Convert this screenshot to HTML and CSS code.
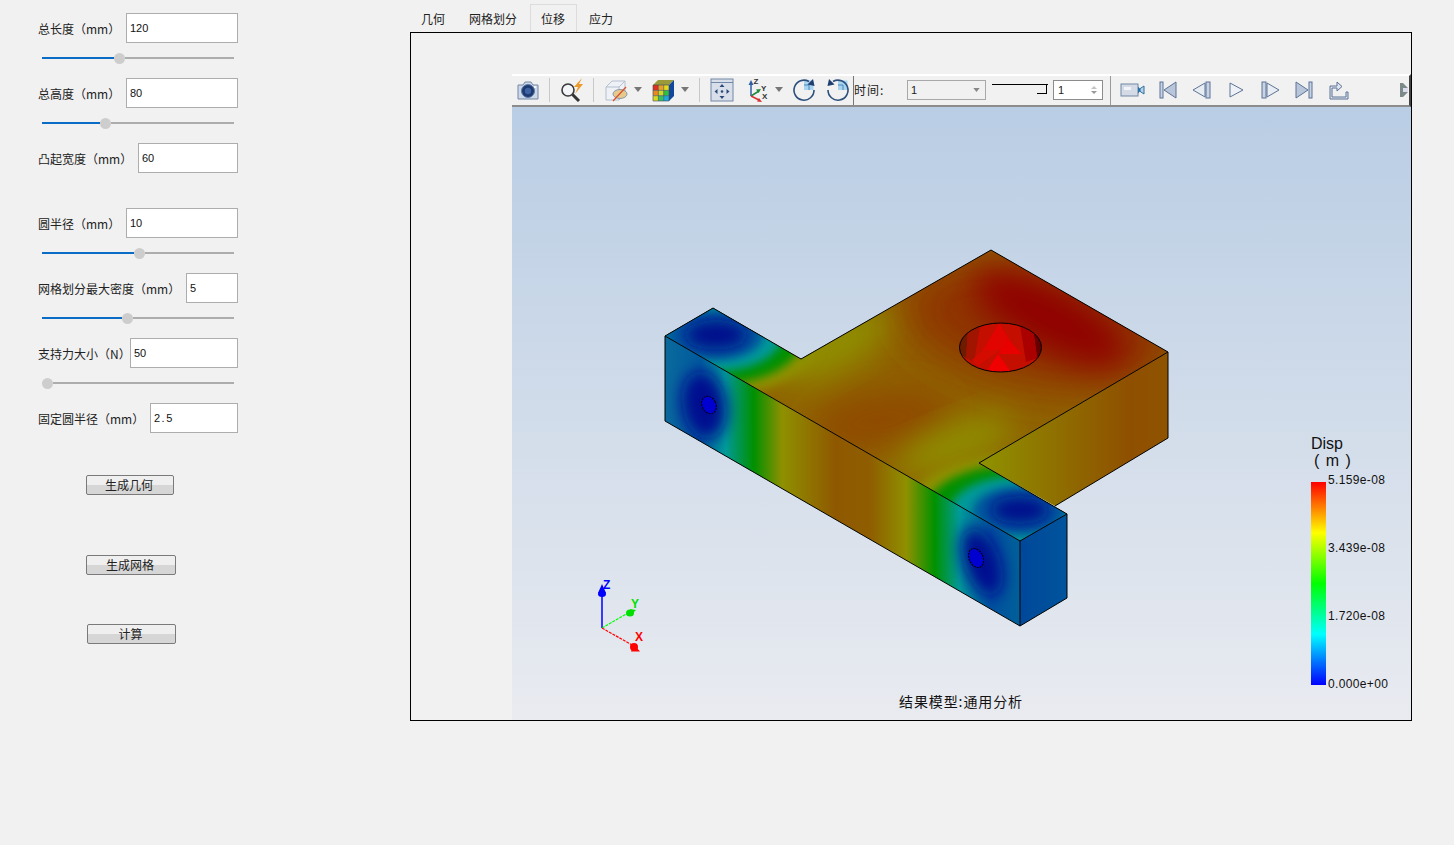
FILE: index.html
```html
<!DOCTYPE html>
<html lang="zh">
<head>
    <meta charset="UTF-8">
    <title>位移</title>
    <link rel="stylesheet" href="styles.css">
</head>
<body>
    <div class="sidebar">
        <div class="field"><label>总长度（mm）</label><input class="w-112" value="120"></div>
        <div class="slider"><div class="fill" style="width:72px"></div><div class="knob"></div><div class="rest"></div></div>

        <div class="field"><label>总高度（mm）</label><input class="w-112" value="80"></div>
        <div class="slider"><div class="fill" style="width:58px"></div><div class="knob"></div><div class="rest"></div></div>

        <div class="field"><label>凸起宽度（mm）</label><input class="w-100" value="60"></div>
        <div class="slider"></div>

        <div class="field"><label>圆半径（mm）</label><input class="w-112" value="10"></div>
        <div class="slider"><div class="fill" style="width:92px"></div><div class="knob"></div><div class="rest"></div></div>

        <div class="field"><label>网格划分最大密度（mm）</label><input class="w-52" value="5"></div>
        <div class="slider"><div class="fill" style="width:80px"></div><div class="knob"></div><div class="rest"></div></div>

        <div class="field"><label>支持力大小（N）</label><input class="w-108" value="50"></div>
        <div class="slider"><div class="fill" style="width:0"></div><div class="knob"></div><div class="rest"></div></div>

        <div class="field"><label>固定圆半径（mm）</label><input class="w-88 spaced" value="2.5"></div>
        <div class="slider"></div>

        <button class="btn btn-geom">生成几何</button>
        <button class="btn btn-mesh">生成网格</button>
        <button class="btn btn-calc">计算</button>
    </div>

    <div class="main">
        <div class="tabs">
            <span class="tab">几何</span>
            <span class="tab">网格划分</span>
            <span class="tab active">位移</span>
            <span class="tab">应力</span>
        </div>
        <div class="panel">
            <div class="viewer">
                <div class="toolbar">
                    <svg class="icon" viewBox="0 0 24 24"><path d="M2 7h5l2-3h6l2 3h5v14H2z" fill="#cdd8e8" stroke="#7387a6"/><circle cx="12" cy="13" r="6.5" fill="#1d3a72" stroke="#5f7ba8"/><circle cx="12" cy="13" r="3.2" fill="#3f62a0"/><circle cx="19" cy="9" r="1" fill="#fff"/></svg>
                    <i class="sep"></i>
                    <svg class="icon" viewBox="0 0 24 24"><circle cx="8" cy="12" r="6" fill="#f3f5f8" stroke="#3a3a3a" stroke-width="1.6"/><path d="M12.500 16.500l6.500 6.500" stroke="#333" stroke-width="3"/><path d="M22 0l-8 9h4l-3 7 8-10h-4l3-6z" fill="#eb9a2c"/></svg>
                    <i class="sep"></i>
                    <svg class="icon" viewBox="0 0 24 24"><path d="M2 9l6-6h13v12l-6 7H2z" fill="#eef1f6" stroke="#b4bfd0"/><path d="M2 9h13v13M15 9l6-6" fill="none" stroke="#b4bfd0"/><ellipse cx="16" cy="16" rx="7" ry="4.5" fill="#e6c98c" stroke="#8c97a8"/><path d="M9 23L22 9" stroke="#d9502c" stroke-width="1.3"/></svg>
                    <svg class="caret" viewBox="0 0 8 5"><path d="M0 0h8L4 5z" fill="#777"/></svg>
                    <svg class="icon" viewBox="0 0 24 24"><path d="M2 7l5-5h16l-5 5z" fill="#9a9a3a"/><path d="M18 7l5-5v16l-5 5z" fill="#12489c"/><rect x="2" y="7" width="5.4" height="5.4" fill="#e23020"/><rect x="7.4" y="7" width="5.3" height="5.4" fill="#e8a020"/><rect x="12.7" y="7" width="5.3" height="5.4" fill="#e4d820"/><rect x="2" y="12.4" width="5.4" height="5.3" fill="#e88a20"/><rect x="7.4" y="12.4" width="5.3" height="5.3" fill="#cfd820"/><rect x="12.7" y="12.4" width="5.3" height="5.3" fill="#30c040"/><rect x="2" y="17.7" width="5.4" height="5.3" fill="#d8d820"/><rect x="7.4" y="17.7" width="5.3" height="5.3" fill="#30c060"/><rect x="12.7" y="17.7" width="5.3" height="5.3" fill="#20a8d8"/><path d="M2 7h16v16H2zM7.4 7v16M12.7 7v16M2 12.4h16M2 17.7h16" fill="none" stroke="#3a4a60" stroke-width=".6"/></svg>
                    <svg class="caret" viewBox="0 0 8 5"><path d="M0 0h8L4 5z" fill="#777"/></svg>
                    <i class="sep tight"></i>
                    <svg class="icon" viewBox="0 0 24 24"><rect x="1" y="1" width="22" height="22" fill="#d9dfea" stroke="#7387a6"/><path d="M1 4.500h22" stroke="#7387a6"/><path d="M12 6l-2.500 3h5zM12 21l-2.500-3h5zM4.500 13.500l3-2.500v5zM19.500 13.500l-3-2.500v5z" fill="#2c4a78"/><circle cx="12" cy="13.500" r="1.300" fill="#2c4a78"/></svg>
                    <svg class="icon gap-11" viewBox="0 0 24 24"><path d="M6 6v12" stroke="#2c5fa8" stroke-width="1.500"/><path d="M6 2l-2.500 5h5z" fill="#2c5fa8"/><path d="M6 18l8-5" stroke="#1d8a3c" stroke-width="1.500"/><path d="M16 11l-5 .5 2.500 3.500z" fill="#1d8a3c"/><path d="M6 18l8 4" stroke="#d83030" stroke-width="1.500"/><path d="M17 24l-5-.5 2-3.500z" fill="#d83030"/><text x="8.500" y="6" class="axis-mark">Z</text><text x="16" y="13" class="axis-mark">Y</text><text x="17" y="21" class="axis-mark">X</text></svg>
                    <svg class="caret" viewBox="0 0 8 5"><path d="M0 0h8L4 5z" fill="#777"/></svg>
                    <svg class="icon" viewBox="0 0 24 24"><path d="M12 12V2.500h9.500V12z" fill="#a9d4f0"/><path d="M12 7h5v5" fill="none" stroke="#4a88b8"/><path d="M17 3.500A10 10 0 1 0 22 12" fill="none" stroke="#2c4f7c" stroke-width="1.600"/><path d="M21 1l1.500 7-7-1.500z" fill="#1f3f70"/></svg>
                    <svg class="icon gap-10" viewBox="0 0 24 24"><path d="M12 12V2.500h9.500V12z" fill="#a9d4f0"/><path d="M12 7h5v5" fill="none" stroke="#4a88b8"/><path d="M7 3.500A10 10 0 1 1 2 12" fill="none" stroke="#2c4f7c" stroke-width="1.600"/><path d="M3 1l-1.500 7 7-1.500z" fill="#1f3f70"/></svg>
                    <i class="sep sep-dark"></i>
                    <span class="time-label">时间:</span>
                    <div class="combo"><span>1</span><svg class="combo-caret" viewBox="0 0 8 5"><path d="M0 0h8L4 5z" fill="#888"/></svg></div>
                    <div class="time-slider"><i></i></div>
                    <div class="spin"><span>1</span><div class="spin-arrows"><b></b><u></u></div></div>
                    <i class="sep sep-play"></i>
                    <div class="playbar">
                        <svg class="icon wide" viewBox="0 0 26 24"><rect x="1" y="6" width="17" height="12" fill="#d4dbe6" stroke="#7387a6"/><rect x="4" y="9" width="7" height="3" fill="#f2f4f8"/><path d="M18 12l6-4v8z" fill="#b8d4e8" stroke="#2f6f9c"/><path d="M18 8.500v7l3-3.500z" fill="#2a70a8"/></svg>
                        <svg class="icon" viewBox="0 0 24 24"><rect x="4" y="4" width="3" height="16" fill="#c8d3e4" stroke="#5d7396"/><path d="M20 4v16L8 12z" fill="#b9c6da" stroke="#5d7396"/></svg>
                        <svg class="icon" viewBox="0 0 24 24"><path d="M15 5v14L3 12z" fill="#e8edf4" stroke="#5d7396"/><rect x="16" y="4" width="4" height="16" fill="#c8d3e4" stroke="#5d7396"/></svg>
                        <svg class="icon" viewBox="0 0 24 24"><path d="M6 5v14l13-7z" fill="#eef2f7" stroke="#5d7396"/></svg>
                        <svg class="icon" viewBox="0 0 24 24"><rect x="4" y="4" width="4" height="16" fill="#c8d3e4" stroke="#5d7396"/><path d="M9 5v14l12-7z" fill="#e8edf4" stroke="#5d7396"/></svg>
                        <svg class="icon" viewBox="0 0 24 24"><path d="M4 4v16l12-8z" fill="#b9c6da" stroke="#5d7396"/><rect x="17" y="4" width="3" height="16" fill="#c8d3e4" stroke="#5d7396"/></svg>
                        <svg class="icon" viewBox="0 0 24 24"><path d="M4 8h7V4l5 4.500-5 4.500v-3H6v9h14v-5h2v7H4z" fill="#dfe6f0" stroke="#5d7396"/></svg>
                        <svg class="grip" viewBox="0 0 8 16"><path d="M0 1h3l5 5H3v4h5l-5 5H0z" fill="#7d8a8a"/><path d="M3 6h5v4H3z" fill="#dde"/></svg>
                    </div>
                </div>
                <svg class="scene" viewBox="512 107 899 613">
                    <defs>
                        <linearGradient id="sky" x1="0" y1="0" x2="0" y2="1">
                            <stop offset="0" stop-color="#b9cde4"/>
                            <stop offset="1" stop-color="#e9ebf0"/>
                        </linearGradient>
                        <linearGradient id="frontBands" gradientUnits="userSpaceOnUse" x1="665" y1="0" x2="1020" y2="0">
                            <stop offset="0" stop-color="#0a6a9c"/>
                            <stop offset=".1" stop-color="#005a9e"/>
                            <stop offset=".17" stop-color="#009a9a"/>
                            <stop offset=".25" stop-color="#009000"/>
                            <stop offset=".33" stop-color="#8f9000"/>
                            <stop offset=".48" stop-color="#8f5800"/>
                            <stop offset=".58" stop-color="#8f5e00"/>
                            <stop offset=".68" stop-color="#8f9000"/>
                            <stop offset=".76" stop-color="#009200"/>
                            <stop offset=".83" stop-color="#009a9a"/>
                            <stop offset=".92" stop-color="#00509e"/>
                            <stop offset="1" stop-color="#006099"/>
                        </linearGradient>
                        <linearGradient id="sideBands" gradientUnits="userSpaceOnUse" x1="985" y1="0" x2="1168" y2="0">
                            <stop offset="0" stop-color="#8f9000"/>
                            <stop offset=".45" stop-color="#8f6a00"/>
                            <stop offset=".8" stop-color="#8f4f00"/>
                            <stop offset="1" stop-color="#8f5400"/>
                        </linearGradient>
                        <linearGradient id="endBands" gradientUnits="userSpaceOnUse" x1="1020" y1="0" x2="1067" y2="0">
                            <stop offset="0" stop-color="#00489a"/>
                            <stop offset="1" stop-color="#00549c"/>
                        </linearGradient>
                        <linearGradient id="legendBands" x1="0" y1="0" x2="0" y2="1">
                            <stop offset="0" stop-color="#ff0000"/>
                            <stop offset=".25" stop-color="#ffff00"/>
                            <stop offset=".5" stop-color="#00ff00"/>
                            <stop offset=".75" stop-color="#00ffff"/>
                            <stop offset="1" stop-color="#0000ff"/>
                        </linearGradient>
                        <clipPath id="topClip"><path d="M665 336L713 308L801 359L991 250L1168 352L979 463L1067 514L1020 541z"/></clipPath>
                        <clipPath id="frontClip"><path d="M665 336L1020 541V626L665 421z"/></clipPath>
                        <clipPath id="holeClip"><ellipse cx="1000.500" cy="347.500" rx="41" ry="24.500"/></clipPath>
                        <filter id="blurHuge" x="-60%" y="-60%" width="220%" height="220%"><feGaussianBlur stdDeviation="24"/></filter>
                        <filter id="blurWide" x="-50%" y="-50%" width="200%" height="200%"><feGaussianBlur stdDeviation="16"/></filter>
                        <filter id="blurMid" x="-50%" y="-50%" width="200%" height="200%"><feGaussianBlur stdDeviation="8"/></filter>
                        <filter id="blurTight" x="-50%" y="-50%" width="200%" height="200%"><feGaussianBlur stdDeviation="5"/></filter>
                    </defs>

                    <rect x="512" y="107" width="899" height="613" fill="url(#sky)"/>

                    <!-- plate top -->
                    <g clip-path="url(#topClip)">
                        <rect x="660" y="245" width="515" height="300" fill="#8f6400"/>
                        <ellipse cx="1040" cy="325" rx="140" ry="62" transform="rotate(10 1040 325)" fill="#8f3000" filter="url(#blurHuge)"/>
                        <ellipse cx="1050" cy="318" rx="85" ry="30" transform="rotate(28 1050 318)" fill="#900000" filter="url(#blurWide)"/>
                        <ellipse cx="880" cy="420" rx="70" ry="30" transform="rotate(-10 880 420)" fill="#8f4c00" filter="url(#blurWide)"/>
                        <ellipse cx="835" cy="345" rx="62" ry="24" transform="rotate(-30 835 345)" fill="#8f9000" filter="url(#blurWide)"/>
                        <ellipse cx="955" cy="445" rx="62" ry="20" transform="rotate(-22 955 445)" fill="#8f9000" filter="url(#blurWide)"/>
                        <ellipse cx="712" cy="338" rx="108" ry="58" fill="#8f9000" filter="url(#blurTight)"/>
                        <ellipse cx="712" cy="338" rx="90" ry="47" fill="#009000" filter="url(#blurTight)"/>
                        <ellipse cx="712" cy="336" rx="70" ry="36" fill="#009a9a" filter="url(#blurTight)"/>
                        <ellipse cx="714" cy="335" rx="50" ry="25" fill="#005a9e" filter="url(#blurTight)"/>
                        <ellipse cx="716" cy="335" rx="32" ry="15" fill="#000a8c" filter="url(#blurMid)"/>
                        <ellipse cx="1015" cy="512" rx="108" ry="58" fill="#8f9000" filter="url(#blurTight)"/>
                        <ellipse cx="1015" cy="512" rx="90" ry="47" fill="#009000" filter="url(#blurTight)"/>
                        <ellipse cx="1018" cy="512" rx="68" ry="36" fill="#009a9a" filter="url(#blurTight)"/>
                        <ellipse cx="1020" cy="511" rx="48" ry="24" fill="#005a9e" filter="url(#blurTight)"/>
                        <ellipse cx="1020" cy="510" rx="30" ry="14" fill="#000a8c" filter="url(#blurMid)"/>
                    </g>

                    <!-- long front face -->
                    <g clip-path="url(#frontClip)">
                        <rect x="665" y="330" width="356" height="300" fill="url(#frontBands)"/>
                        <ellipse cx="704" cy="405" rx="22" ry="34" transform="rotate(-10 704 405)" fill="#000a90" filter="url(#blurMid)"/>
                        <ellipse cx="982" cy="562" rx="18" ry="36" transform="rotate(-20 982 562)" fill="#000a90" filter="url(#blurMid)"/>
                    </g>

                    <path d="M979 463L1168 352V438L1055 506z" fill="url(#sideBands)"/>
                    <path d="M1020 541L1067 514V598L1020 626z" fill="url(#endBands)"/>

                    <!-- big hole -->
                    <g clip-path="url(#holeClip)">
                        <rect x="958" y="322" width="86" height="52" fill="#c40e00"/>
                        <path d="M958 335L968 331L966 358L958 352z" fill="#6e1c00"/>
                        <path d="M968 331L980 326L974 362L966 358z" fill="#a01400"/>
                        <path d="M1042 335L1033 329L1037 358L1042 352z" fill="#660000"/>
                        <path d="M1020 325L1033 329L1037 358L1026 362z" fill="#aa0000"/>
                        <path d="M999 323L983 350L1016 350z" fill="#e20400"/>
                        <path d="M983 350L1000 350L978 366L972 360z" fill="#d40c00"/>
                        <path d="M1008 339L998 354L1022 354z" fill="#e80000"/>
                        <path d="M998 354L986 372L1011 372z" fill="#f00000"/>
                    </g>
                    <ellipse cx="1000.500" cy="347.500" rx="41" ry="24.500" fill="none" stroke="#000"/>

                    <!-- small holes -->
                    <ellipse cx="709" cy="405" rx="7" ry="9" transform="rotate(-25 709 405)" fill="#0000d0" stroke="#000" stroke-dasharray="2 1"/>
                    <ellipse cx="976" cy="558" rx="7" ry="10" transform="rotate(-25 976 558)" fill="#0000d0" stroke="#000" stroke-dasharray="2 1"/>

                    <!-- edges -->
                    <path class="edge" d="M665 336L713 308L801 359L991 250L1168 352V438L1055 506M1168 352L979 463L1067 514V598L1020 626L665 421V336L1020 541V626M1020 541L1067 514"/>

                    <!-- triad -->
                    <path d="M602 628V592" stroke="#0000ff" stroke-width="1.500"/>
                    <path d="M602 584l-4 9h8z" fill="#0000ff"/>
                    <ellipse cx="602" cy="594" rx="4" ry="3" fill="#0000ff"/>
                    <path d="M602 628L628 613" stroke="#00ff00" stroke-width="1.200" stroke-dasharray="3 1"/>
                    <ellipse cx="630" cy="613" rx="4" ry="3.500" fill="#00e000"/>
                    <path d="M636 610l-6-1 1 6z" fill="#00e000"/>
                    <path d="M602 628L632 645" stroke="#ff0000" stroke-width="1.200" stroke-dasharray="3 1"/>
                    <ellipse cx="634" cy="647" rx="4" ry="4" fill="#ff0000"/>
                    <path d="M640 651.500l-9 0 3-7z" fill="#ff0000"/>
                    <text x="603" y="589" class="axis-letter z">Z</text>
                    <text x="631" y="608" class="axis-letter y">Y</text>
                    <text x="635" y="641" class="axis-letter x">X</text>

                    <!-- legend -->
                    <text x="1311" y="449" class="legend-title">Disp</text>
                    <text x="1314" y="466" class="legend-title spaced">( m )</text>
                    <rect x="1311" y="482" width="15" height="203" fill="url(#legendBands)"/>
                    <text x="1328" y="484" class="legend-value">5.159e-08</text>
                    <text x="1328" y="552" class="legend-value">3.439e-08</text>
                    <text x="1328" y="620" class="legend-value">1.720e-08</text>
                    <text x="1328" y="688" class="legend-value">0.000e+00</text>

                    <text x="899" y="707" class="caption">结果模型:通用分析</text>
                </svg>
            </div>
        </div>
    </div>
</body>
</html>
```

FILE: styles.css
```css
* {
    box-sizing: border-box;
    margin: 0;
    padding: 0;
}

body {
    display: flex;
    height: 845px;
    overflow: hidden;
    background-color: #f1f1f1;
    color: #222;
    font-family: "Liberation Sans", "Noto Sans CJK SC", sans-serif;
    font-size: 12px;
}

/* left column */
.sidebar {
    width: 409px;
    padding: 13px 0 0 38px;
    flex-shrink: 0;
}

.field {
    display: flex;
    align-items: center;
    width: 200px;
    height: 30px;
}

.field label {
    flex: 1 1 0;
    min-width: 0;
    white-space: nowrap;
    font-family: "Noto Sans CJK SC", sans-serif;
    font-size: 12px;
}

.field input {
    flex-shrink: 0;
    height: 30px;
    border: 1px solid #adadad;
    background: #fff;
    padding-left: 3px;
    font-family: "Liberation Sans", sans-serif;
    font-size: 11px;
    color: #111;
    outline: none;
}

.w-112 { width: 112px; }
.w-108 { width: 108px; }
.w-100 { width: 100px; }
.w-88 { width: 88px; }
.w-52 { width: 52px; }

.field input.spaced {
    letter-spacing: 1.5px;
}

.slider {
    display: flex;
    align-items: center;
    width: 192px;
    height: 35px;
    margin-left: 4px;
    padding-bottom: 5px;
}

.fill {
    height: 2px;
    background-color: #0a6cc4;
}

.knob {
    width: 11px;
    height: 11px;
    border-radius: 50%;
    background-color: #cdcdcd;
    flex-shrink: 0;
}

.rest {
    flex: 1;
    height: 2px;
    background-color: #adadad;
}

.btn {
    display: block;
    height: 20px;
    padding-right: 2px;
    border: 1px solid #7a7a7a;
    border-radius: 2px;
    background: linear-gradient(#efefef 50%, #d6d6d6 50%);
    font-family: "Noto Sans CJK SC", sans-serif;
    font-size: 12px;
    line-height: 16px;
    color: #222;
}

.btn-geom {
    width: 88px;
    margin: 7px 0 0 48px;
}

.btn-mesh {
    width: 90px;
    margin: 60px 0 0 48px;
}

.btn-calc {
    width: 89px;
    margin: 49px 0 0 49px;
}

/* tabs + panel */
.main {
    width: 1003px;
}

.tabs {
    display: flex;
    align-items: flex-end;
    height: 32px;
    font-family: "Noto Sans CJK SC", sans-serif;
    font-size: 12px;
}

.tab {
    padding: 0 12px;
    height: 28px;
    line-height: 29px;
}

.tab.active {
    padding: 0 11px 0 10px;
    margin-left: 1px;
    border: 1px solid #dcdcdc;
    border-bottom: none;
    line-height: 27px;
}

.panel {
    width: 1002px;
    height: 689px;
    margin-left: 1px;
    border: 1px solid #000;
    padding: 41px 0 0 101px;
}

.viewer {
    width: 899px;
    height: 646px;
}

.toolbar {
    display: flex;
    align-items: center;
    height: 33px;
    padding: 0 0 2px 4px;
    background-color: #f1f1f1;
    border-top: 2px solid #fff;
    border-bottom: 2px solid #8c8c8c;
    border-right: 2px solid #444;
}

.icon {
    width: 24px;
    height: 24px;
    flex-shrink: 0;
}

.icon.wide {
    width: 26px;
}

.caret {
    width: 8px;
    height: 5px;
    margin: 0 9px 0 6px;
    flex-shrink: 0;
}

.gap-11 { margin-left: 11px; }
.gap-10 { margin-left: 10px; }

.axis-mark {
    font-family: "Liberation Sans", sans-serif;
    font-size: 8px;
    font-weight: bold;
    fill: #333;
}

.sep {
    width: 1px;
    height: 24px;
    margin: 0 10px 0 9px;
    background-color: #c8c8c8;
    flex-shrink: 0;
}

.sep.tight {
    margin-left: 1px;
}

.sep-dark {
    align-self: stretch;
    height: auto;
    margin: 0 0 -2px 3px;
    background-color: #777;
}

.sep-play {
    align-self: stretch;
    height: auto;
    margin: 0 0 -2px 7px;
    background-color: #9a9a9a;
}

.time-label {
    width: 53px;
    font-family: "Noto Sans CJK SC", sans-serif;
    font-size: 12px;
    letter-spacing: 1px;
}

.combo {
    display: flex;
    align-items: center;
    justify-content: space-between;
    width: 79px;
    height: 20px;
    padding: 0 5px 0 3px;
    border: 1px solid #a8a8a8;
    font-size: 11px;
}

.combo-caret {
    width: 7px;
    height: 4px;
}

.time-slider {
    width: 56px;
    height: 10px;
    margin: -2px 5px 0 6px;
    border-top: 1px solid #000;
}

.time-slider i {
    display: block;
    width: 10px;
    height: 9px;
    margin-left: 45px;
    border-right: 1px solid #000;
    border-bottom: 1px solid #000;
}

.spin {
    display: flex;
    align-items: center;
    justify-content: space-between;
    width: 50px;
    height: 20px;
    padding: 0 5px 0 4px;
    border: 1px solid #8c8c8c;
    background-color: #fff;
    font-size: 11px;
}

.spin-arrows b,
.spin-arrows u {
    display: block;
    width: 0;
    height: 0;
    margin: 2px 0;
    border-left: 3px solid transparent;
    border-right: 3px solid transparent;
}

.spin-arrows b {
    border-bottom: 3px solid #c4c4c4;
}

.spin-arrows u {
    border-top: 3px solid #999;
}

.playbar {
    display: flex;
    align-items: center;
    flex: 1;
    height: 27px;
    gap: 10px;
    padding-left: 2px;
    margin-left: 7px;
}

.grip {
    width: 8px;
    height: 16px;
    margin-left: auto;
    margin-right: 1px;
}

.scene {
    display: block;
    width: 899px;
    height: 613px;
}

.edge {
    fill: none;
    stroke: #000;
    stroke-width: 1;
}

.axis-letter {
    font-family: "Liberation Sans", sans-serif;
    font-size: 12px;
    font-weight: bold;
}

.axis-letter.x { fill: #ff0000; }
.axis-letter.y { fill: #00e000; }
.axis-letter.z { fill: #0000ff; }

.legend-title {
    font-family: "Liberation Sans", sans-serif;
    font-size: 16px;
    fill: #111;
}

.legend-title.spaced {
    letter-spacing: 1px;
}

.legend-value {
    font-family: "Liberation Sans", sans-serif;
    font-size: 12px;
    letter-spacing: .35px;
    fill: #111;
}

.caption {
    font-family: "Noto Sans CJK SC", sans-serif;
    font-size: 14px;
    letter-spacing: .9px;
    fill: #111;
}
```
